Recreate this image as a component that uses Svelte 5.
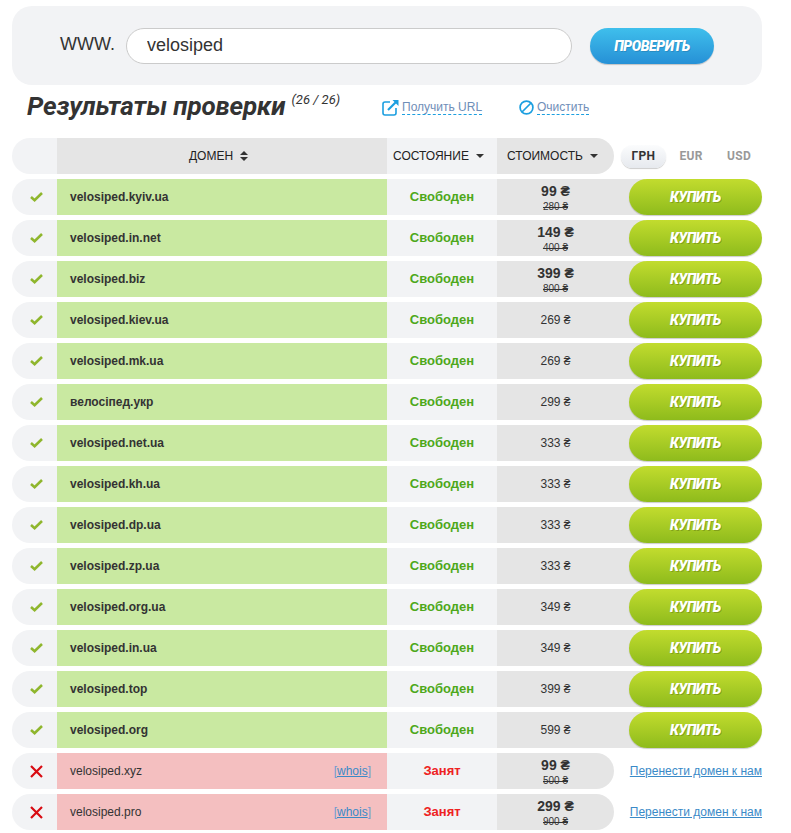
<script>
const free = [
  ['velosiped.kyiv.ua', '99', '280'],
  ['velosiped.in.net', '149', '400'],
  ['velosiped.biz', '399', '800'],
  ['velosiped.kiev.ua', '269'],
  ['velosiped.mk.ua', '269'],
  ['велосіпед.укр', '299'],
  ['velosiped.net.ua', '333'],
  ['velosiped.kh.ua', '333'],
  ['velosiped.dp.ua', '333'],
  ['velosiped.zp.ua', '333'],
  ['velosiped.org.ua', '349'],
  ['velosiped.in.ua', '349'],
  ['velosiped.top', '399'],
  ['velosiped.org', '599']
]
const taken = [
  ['velosiped.xyz', '99', '500'],
  ['velosiped.pro', '299', '900']
]
</script>

<div class="page">
  <form class="search" onsubmit={(e) => e.preventDefault()}>
    <span class="www">WWW.</span>
    <input class="domain-input" value="velosiped" />
    <button class="check">ПРОВЕРИТЬ</button>
  </form>

  <div class="title-row">
    <h1>Результаты проверки <sup>(26 / 26)</sup></h1>
    <a class="tool url" href="#url">
      <svg width="17" height="17" viewBox="0 0 17 17" fill="none" stroke="#1c9fe0" stroke-width="1.6">
        <path d="M8 3H3a2 2 0 0 0-2 2v9a2 2 0 0 0 2 2h9a2 2 0 0 0 2-2V9" />
        <path d="M6 11l8-8" stroke-width="2.2" />
        <path d="M16.5 1H10.5l6 6z" fill="#1c9fe0" stroke="none" />
      </svg>
      <span>Получить URL</span>
    </a>
    <a class="tool clear" href="#clear">
      <svg width="15" height="15" viewBox="0 0 15 15" fill="none" stroke="#1c9fe0" stroke-width="1.7">
        <circle cx="7.5" cy="7.5" r="6.4" />
        <path d="M3 12L12 3" />
      </svg>
      <span>Очистить</span>
    </a>
  </div>

  <div class="row head">
    <div class="c-icon"></div>
    <div class="c-domain">ДОМЕН
      <svg width="8" height="10" viewBox="0 0 8 10" fill="#333"><path d="M4 0l4 4H0zM4 10L0 6h8z" /></svg>
    </div>
    <div class="c-status">СОСТОЯНИЕ <i class="caret"></i></div>
    <div class="c-price">СТОИМОСТЬ <i class="caret"></i></div>
    <div class="currency">
      <span class="active">ГРН</span>
      <span>EUR</span>
      <span>USD</span>
    </div>
  </div>

  {#each free as [name, price, old]}
    <div class="row">
      <div class="c-icon">
        <svg width="13" height="10" viewBox="0 0 13 10" fill="none" stroke="#8fb62d" stroke-width="2.6"><path d="M1 5l3.6 3.2L12 1" /></svg>
      </div>
      <div class="c-domain free"><b>{name}</b></div>
      <div class="c-status ok">Свободен</div>
      <div class="c-price">
        {#if old}
          <b>{price} ₴</b><s>{old} ₴</s>
        {:else}
          {price} ₴
        {/if}
      </div>
      <button class="buy">КУПИТЬ</button>
    </div>
  {/each}

  {#each taken as [name, price, old]}
    <div class="row">
      <div class="c-icon">
        <svg width="13" height="13" viewBox="0 0 13 13" fill="none" stroke="#d80b12" stroke-width="2.2"><path d="M1 1l11 11M12 1L1 12" /></svg>
      </div>
      <div class="c-domain busy">{name}<a href="#whois">[<u>whois</u>]</a></div>
      <div class="c-status no">Занят</div>
      <div class="c-price">
        <b>{price} ₴</b><s>{old} ₴</s>
      </div>
      <a class="transfer" href="#transfer">Перенести домен к нам</a>
    </div>
  {/each}
</div>

<style>
  :global(body) {
    background: #fff;
    font-family: "Liberation Sans", Arial, sans-serif;
    color: #333;
  }
  .page {
    width: 750px;
    margin-left: 12px;
    padding-top: 6px;
  }
  .search {
    height: 79px;
    box-sizing: border-box;
    display: flex;
    align-items: center;
    padding: 0 48px 0 48px;
    background: #f2f3f5;
    border-radius: 20px;
  }
  .www {
    font-size: 18px;
    width: 66px;
    margin-bottom: 2px;
  }
  .domain-input {
    width: 446px;
    height: 36px;
    box-sizing: border-box;
    padding: 0 20px;
    border: 1px solid #cbcbcb;
    border-radius: 18px;
    background: #fff;
    font: 18px "Liberation Sans", Arial, sans-serif;
    color: #333;
    outline: none;
  }
  .check {
    width: 124px;
    height: 36px;
    margin-left: 18px;
    border: 0;
    border-radius: 18px;
    background: linear-gradient(#3fbfec, #2690d6);
    box-shadow: 0 1px 1px rgba(0, 0, 0, 0.2);
    color: #fff;
    font: italic 900 14px Roboto, sans-serif;
    letter-spacing: -0.4px;
    text-shadow: 1px 1px 0 rgba(0, 0, 0, 0.15);
  }
  .title-row {
    height: 53px;
    display: flex;
    align-items: center;
  }
  h1 {
    margin: 0 0 11px 15px;
    width: 355px;
    font: italic 700 26px Roboto, sans-serif;
    letter-spacing: -0.15px;
    color: #333;
    white-space: nowrap;
  }
  sup {
    font-size: 13px;
    font-weight: 400;
    letter-spacing: 0;
    vertical-align: 11px;
    line-height: 0;
  }
  .tool {
    display: flex;
    align-items: center;
    gap: 3px;
    font-size: 12px;
    color: #6f8eb8;
    text-decoration: none;
    margin-bottom: 9px;
  }
  .tool span {
    border-bottom: 1px dashed #1c9fe0;
    line-height: 14px;
  }
  .url {
    width: 137px;
  }
  .row {
    display: flex;
    height: 36px;
    margin-bottom: 5px;
    align-items: stretch;
    font-size: 12px;
  }
  .row:last-child {
    margin-bottom: 0;
  }
  .c-icon {
    width: 45px;
    display: flex;
    align-items: center;
    justify-content: center;
    padding-left: 3px;
    box-sizing: border-box;
    background: #f2f3f5;
    border-radius: 18px 0 0 18px;
  }
  .c-domain {
    width: 330px;
    box-sizing: border-box;
    display: flex;
    align-items: center;
    padding: 0 16px 0 13px;
    font-size: 12px;
  }
  .free {
    background: #c9e9a1;
  }
  .busy {
    background: #f4bfc0;
    justify-content: space-between;
  }
  .busy a {
    color: #6f9bd0;
    text-decoration: none;
  }
  .busy u {
    color: #3a8ac8;
  }
  .c-status {
    width: 110px;
    box-sizing: border-box;
    padding-bottom: 2px;
    display: flex;
    align-items: center;
    justify-content: center;
    background: #f2f3f5;
    font-size: 13px;
  }
  .ok {
    color: #4ea81a;
    font-weight: 700;
  }
  .no {
    color: #ee2222;
    font-weight: 700;
  }
  .c-price {
    width: 148px;
    display: flex;
    flex-direction: column;
    align-items: center;
    justify-content: center;
    padding-right: 31px;
    box-sizing: border-box;
    background: #e5e5e5;
    font-size: 12px;
  }
  .c-price b {
    font-size: 14px;
    line-height: 15px;
    padding-top: 2px;
  }
  .c-price s {
    font-size: 10px;
    line-height: 11px;
    margin-top: 2px;
  }
  .buy {
    width: 133px;
    margin-left: -16px;
    border: 0;
    border-radius: 18px;
    background: linear-gradient(#c2dc2e, #8ebb1c);
    box-shadow: 0 1px 1px rgba(0, 0, 0, 0.2);
    color: #fff;
    font: italic 900 14px Roboto, sans-serif;
    letter-spacing: -0.4px;
    text-shadow: 1px 1px 0 rgba(0, 0, 0, 0.2);
  }
  .head {
    font-size: 12px;
    color: #222;
  }
  .head .c-domain {
    justify-content: center;
    gap: 7px;
    background: #e5e5e5;
    padding: 0 7px 0 0;
  }
  .head .c-status {
    font-size: 12px;
    gap: 7px;
    padding: 0 7px 0 0;
    background: #f2f3f5;
  }
  .head .c-price {
    width: 117px;
    flex-direction: row;
    gap: 7px;
    padding-right: 6px;
    border-radius: 0 18px 18px 0;
  }
  .caret {
    border: 4px solid transparent;
    border-top-color: #333;
    border-bottom: 0;
  }
  .currency {
    display: flex;
    align-items: center;
    gap: 2px;
    margin-left: 7px;
    font: 700 12px Roboto, sans-serif;
    color: #999;
    letter-spacing: 0.3px;
  }
  .currency span {
    width: 46px;
    text-align: center;
  }
  .currency .active {
    width: 45px;
    height: 23px;
    line-height: 23px;
    box-sizing: border-box;
    border-radius: 12px;
    background: linear-gradient(#fbfcfd, #e6e9ee);
    box-shadow: 0 1px 1px rgba(0, 0, 0, 0.2);
    color: #333;
  }
  .row:nth-last-child(-n + 2) .c-price {
    width: 117px;
    padding-right: 0;
    border-radius: 0 18px 18px 0;
  }
  .transfer {
    margin-left: auto;
    align-self: center;
    color: #3a8ac8;
    font-size: 12px;
  }
</style>
